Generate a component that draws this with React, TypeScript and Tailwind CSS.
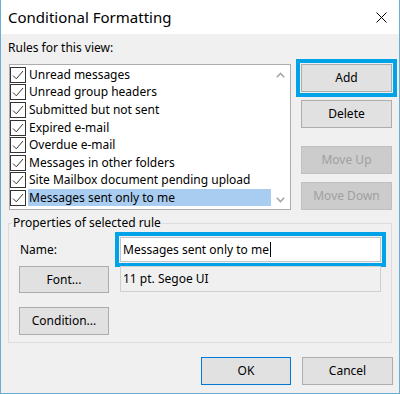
const rules = [
  'Unread messages',
  'Unread group headers',
  'Submitted but not sent',
  'Expired e-mail',
  'Overdue e-mail',
  'Messages in other folders',
  'Site Mailbox document pending upload',
  'Messages sent only to me',
]

const CheckBox = () => (
  <svg width="16" height="16" viewBox="0 0 16 16" className="shrink-0">
    <rect x="0.5" y="0.5" width="15" height="15" fill="#fff" stroke="#333" />
    <path d="M3 8.5 L6.3 11.8 L13 4" fill="none" stroke="#333" strokeWidth="1" />
  </svg>
)

const Chevron = ({ up }: { up?: boolean }) => (
  <svg width="9" height="6" viewBox="0 0 9 6">
    <path d={up ? 'M0.8 5.2 L4.5 1.5 L8.2 5.2' : 'M0.8 0.8 L4.5 4.5 L8.2 0.8'} fill="none" stroke="#a6a6a6" strokeWidth="1.6" />
  </svg>
)

const Button = ({ children, className = '', disabled }: { children: React.ReactNode; className?: string; disabled?: boolean }) => (
  <button
    className={`flex items-center justify-center border ${disabled ? 'bg-[#cccccc] border-[#bfbfbf] text-[#a0a0a0]' : 'bg-[#e1e1e1] border-[#adadad] text-black'} ${className}`}
  >
    {children}
  </button>
)

export default function App() {
  return (
    <div className="w-[400px] h-[394px] bg-[#f0f0f0] border-x border-b border-[#6aaed6] flex flex-col font-['Noto_Sans','Segoe_UI',sans-serif] text-[12px] leading-[16px] text-black">
      {/* title bar */}
      <div className="h-[34px] shrink-0 bg-white flex items-center justify-between pl-[7px] pr-[12px]">
        <span className="text-[15px]">Conditional Formatting</span>
        <svg width="11" height="11" viewBox="0 0 11 11">
          <path d="M0.5 0.5 L10.5 10.5 M10.5 0.5 L0.5 10.5" stroke="#000" strokeWidth="1" />
        </svg>
      </div>

      <div className="flex flex-col pl-[7px] pr-[6px]">
        <div className="mt-[6px] h-[16px]">Rules for this view:</div>

        <div className="mt-[8px] flex">
          <div className="ml-[1px] w-[282px] h-[146px] border border-[#acacac] bg-white flex">
            <div className="flex-1 flex flex-col pt-[1px]">
              {rules.map((r, i) => (
                <div key={r} className="h-[17.6px] flex items-center">
                  <CheckBox />
                  <span className={`ml-[2px] pl-[1px] flex-1 h-[17px] flex items-center whitespace-nowrap overflow-hidden ${i === rules.length - 1 ? 'bg-[#a9cdf0]' : ''}`}>
                    {r}
                  </span>
                </div>
              ))}
            </div>
            <div className="w-[19px] flex flex-col items-center justify-between pt-[7px] pb-[6px]">
              <Chevron up />
              <Chevron />
            </div>
          </div>

          <div className="ml-[10px] w-[91px] flex flex-col">
            <Button className="h-[28px] outline-4 outline-offset-1 outline-[#00a2e8]">Add</Button>
            <Button className="h-[28px] mt-[8px]">Delete</Button>
            <Button disabled className="h-[28px] mt-[18px]">Move Up</Button>
            <Button disabled className="h-[28px] mt-[8px]">Move Down</Button>
          </div>
        </div>

        <fieldset className="mt-[5px] w-[384px] h-[128px] border border-[#dcdcdc]">
          <legend className="ml-[3px] px-[1px] h-[16px]">Properties of selected rule</legend>
          <div className="mt-[6px] pl-[10px] flex items-center">
            <span className="w-[101px] pl-[1px]">Name:</span>
            <div className="w-[261px] h-[25px] bg-white border border-[#c4c4cc] outline-4 outline-offset-1 outline-[#00a2e8] flex items-center pl-[2px]">
              Messages sent only to me
              <span className="ml-[1px] w-px h-[15px] bg-black" />
            </div>
          </div>
          <div className="mt-[4px] pl-[10px] flex">
            <Button className="w-[90px] h-[27px]">Font...</Button>
            <div className="ml-[11px] w-[261px] h-[26px] border border-[#cfcfcf] flex items-center pl-[2px]">
              11 pt. Segoe UI
            </div>
          </div>
          <div className="mt-[14px] pl-[10px] flex">
            <Button className="w-[90px] h-[28px]">Condition...</Button>
          </div>
        </fieldset>

        <div className="mt-[14px] flex justify-end gap-[11px]">
          <Button className="w-[90px] h-[28px] !border-[#0078d7]">OK</Button>
          <Button className="w-[91px] h-[28px]">Cancel</Button>
        </div>
      </div>
    </div>
  )
}
